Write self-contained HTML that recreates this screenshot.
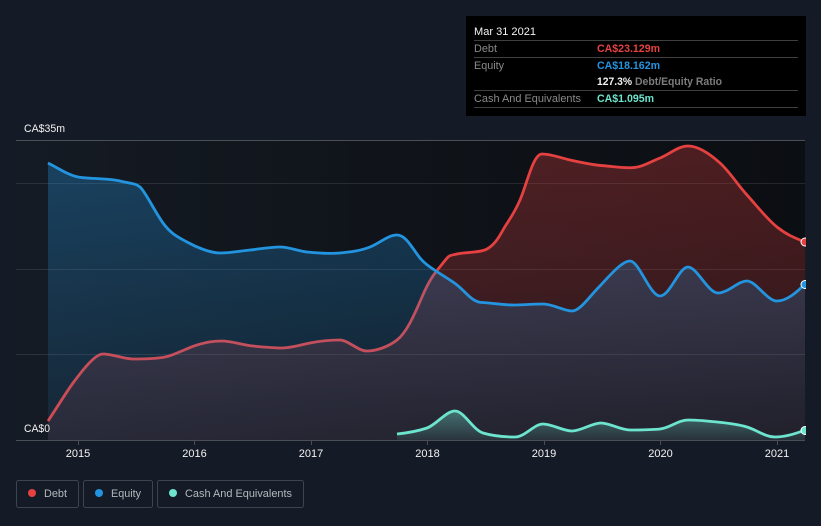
<!DOCTYPE html>
<html><head><meta charset="utf-8"><style>
html,body{margin:0;padding:0;background:#151b26;width:821px;height:526px;overflow:hidden}
svg{position:absolute;left:0;top:0}
text{font-family:"Liberation Sans",sans-serif;font-size:11px}
.tb{font-size:10.6px}
.b{font-weight:bold}
</style></head><body>
<svg width="821" height="526" viewBox="0 0 821 526" xmlns="http://www.w3.org/2000/svg">
<defs>
<linearGradient id="bgp" x1="0" x2="1" y1="0" y2="0"><stop offset="0" stop-color="#151b24"/><stop offset=".45" stop-color="#10141a"/><stop offset="1" stop-color="#0b0e12"/></linearGradient>
<linearGradient id="fd" gradientUnits="userSpaceOnUse" x1="0" x2="0" y1="140" y2="440"><stop offset="0" stop-color="#e64141" stop-opacity=".3"/><stop offset=".5" stop-color="#e64141" stop-opacity=".22"/><stop offset=".87" stop-color="#e64141" stop-opacity=".12"/><stop offset="1" stop-color="#e64141" stop-opacity=".1"/></linearGradient>
<linearGradient id="fe" gradientUnits="userSpaceOnUse" x1="0" x2="0" y1="140" y2="440"><stop offset="0" stop-color="#2394df" stop-opacity=".34"/><stop offset="1" stop-color="#2394df" stop-opacity=".1"/></linearGradient>
<linearGradient id="fc" gradientUnits="userSpaceOnUse" x1="0" x2="0" y1="410" y2="440"><stop offset="0" stop-color="#6ce4ce" stop-opacity=".4"/><stop offset="1" stop-color="#6ce4ce" stop-opacity=".08"/></linearGradient>
<clipPath id="cp"><rect x="16" y="130" width="790" height="320"/></clipPath>
</defs>
<rect x="0" y="0" width="821" height="526" fill="#151b26"/>
<rect x="16" y="140" width="789" height="300" fill="url(#bgp)"/>
<g stroke="#fff" stroke-opacity=".1" stroke-width="1">
<path d="M16 183.500H805M16 269.500H805M16 354.500H805"/>
</g>
<path d="M16 140.500H805M16 440.500H805" stroke="#4b4e55" stroke-width="1"/>
<path d="M78.500 441V445M194.500 441V445M311.500 441V445M427.500 441V445M544.500 441V445M660.500 441V445M777.500 441V445" stroke="#4b4e55"/>

<path fill="url(#fd)" d="M48,421C56,409 67,391 73,383S94,354 103,354S125,359 133,359S155,359 165,357S187,348 197,345S213,341 222,341S243,345 253,346S273,348 282,348S300,345 310,343S332,340 340,340S358,351 367,351S388,347 397,340S413,318 422,297S436,272 443,263S449,256 457,254S480,253 487,249S498,239 503,230S513,216 520,200S533,154 542,154S561,158 570,160S593,165 603,165.700S622,168 632,167.700S650,162 660,158S678,146 688,146S710,154 720,163S737,184 747,195S767,219 777,227S795,238 805,242L805,440L48,440Z"/>
<path fill="none" stroke="#e64141" stroke-width="2.800" stroke-linejoin="round" d="M48,421C56,409 67,391 73,383S94,354 103,354S125,359 133,359S155,359 165,357S187,348 197,345S213,341 222,341S243,345 253,346S273,348 282,348S300,345 310,343S332,340 340,340S358,351 367,351S388,347 397,340S413,318 422,297S436,272 443,263S449,256 457,254S480,253 487,249S498,239 503,230S513,216 520,200S533,154 542,154S561,158 570,160S593,165 603,165.700S622,168 632,167.700S650,162 660,158S678,146 688,146S710,154 720,163S737,184 747,195S767,219 777,227S795,238 805,242"/>

<path fill="url(#fe)" d="M48,163C58,168 68,175 78,177S108,178 120,181S135,183 140,187S155,212 163,223S178,237 187,242S210,253 220,253S240,251 250,250S270,247 280,247S297,251 307,252S330,254 340,253S360,251 370,247S388,235 397,235S412,248 420,258S447,277 457,285S472,302 482,302.500S503,305 513,305S533,304 543,304S564,311 572,311S590,296 598,288S621,261 630,261S650,296 660,296S679,267 688,267S708,293 718,293S738,281 747,281S767,301 777,301S797,292 805,284L805,440L48,440Z"/>
<path fill="none" stroke="#2394df" stroke-width="2.800" stroke-linejoin="round" d="M48,163C58,168 68,175 78,177S108,178 120,181S135,183 140,187S155,212 163,223S178,237 187,242S210,253 220,253S240,251 250,250S270,247 280,247S297,251 307,252S330,254 340,253S360,251 370,247S388,235 397,235S412,248 420,258S447,277 457,285S472,302 482,302.500S503,305 513,305S533,304 543,304S564,311 572,311S590,296 598,288S621,261 630,261S650,296 660,296S679,267 688,267S708,293 718,293S738,281 747,281S767,301 777,301S797,292 805,284"/>

<path fill="url(#fc)" d="M397,434C407,433 418,431 427,428S446,411 455,411S473,430 483,433S505,437 515,437S534,424 543,424S563,431 572,431S592,423 601,423S620,430 630,430S650,430 660,429S678,420 688,420S707,421 717,422S737,424 747,427S765,437 775,437S795,434 805,430L805,440L397,440Z"/>
<path fill="none" stroke="#6ce4ce" stroke-width="2.800" stroke-linejoin="round" d="M397,434C407,433 418,431 427,428S446,411 455,411S473,430 483,433S505,437 515,437S534,424 543,424S563,431 572,431S592,423 601,423S620,430 630,430S650,430 660,429S678,420 688,420S707,421 717,422S737,424 747,427S765,437 775,437S795,434 805,430"/>

<g clip-path="url(#cp)" stroke="#fff" stroke-width="1">
<circle cx="805" cy="242" r="4" fill="#e64141"/>
<circle cx="805" cy="284.500" r="4" fill="#2394df"/>
<circle cx="805" cy="430.500" r="4" fill="#6ce4ce"/>
</g>

<text x="24" y="132" fill="#f2f2f2" textLength="41" lengthAdjust="spacingAndGlyphs">CA$35m</text>
<text x="24" y="432" fill="#f2f2f2" textLength="26" lengthAdjust="spacingAndGlyphs">CA$0</text>
<g fill="#f2f2f2" text-anchor="middle">
<text x="78" y="457">2015</text><text x="194.500" y="457">2016</text><text x="311" y="457">2017</text><text x="427.500" y="457">2018</text><text x="544" y="457">2019</text><text x="660.500" y="457">2020</text><text x="777" y="457">2021</text>
</g>

<rect x="466" y="16" width="340" height="100" fill="#000"/>
<path d="M474 40.500H798M474 57.500H798M474 90.500H798M474 107.500H798" stroke="#3f3f3f"/>
<text class="tb" x="474" y="35" fill="#f2f2f2" textLength="62" lengthAdjust="spacingAndGlyphs">Mar 31 2021</text>
<text class="tb" x="474" y="52" fill="#8a8a8a" textLength="23" lengthAdjust="spacingAndGlyphs">Debt</text>
<text class="tb b" x="597" y="52" fill="#e64141" textLength="63" lengthAdjust="spacingAndGlyphs">CA$23.129m</text>
<text class="tb" x="474" y="69" fill="#8a8a8a" textLength="30" lengthAdjust="spacingAndGlyphs">Equity</text>
<text class="tb b" x="597" y="69" fill="#2394df" textLength="63" lengthAdjust="spacingAndGlyphs">CA$18.162m</text>
<text class="tb b" x="597" y="85" fill="#f2f2f2" textLength="35" lengthAdjust="spacingAndGlyphs">127.3%</text>
<text class="tb b" x="635" y="85" fill="#7d7d7d" textLength="87" lengthAdjust="spacingAndGlyphs">Debt/Equity Ratio</text>
<text class="tb" x="474" y="102" fill="#8a8a8a" textLength="107" lengthAdjust="spacingAndGlyphs">Cash And Equivalents</text>
<text class="tb b" x="597" y="102" fill="#6ce4ce" textLength="57" lengthAdjust="spacingAndGlyphs">CA$1.095m</text>

<g fill="none" stroke="#3f434b">
<rect x="16.500" y="480.500" width="62" height="27" rx="2"/>
<rect x="83.500" y="480.500" width="69" height="27" rx="2"/>
<rect x="157.500" y="480.500" width="146" height="27" rx="2"/>
</g>
<circle cx="32" cy="493" r="4" fill="#e64141"/>
<circle cx="99" cy="493" r="4" fill="#2394df"/>
<circle cx="173" cy="493" r="4" fill="#6ce4ce"/>
<text x="44" y="497" fill="#b5b8bd" textLength="23" lengthAdjust="spacingAndGlyphs">Debt</text>
<text x="111" y="497" fill="#b5b8bd" textLength="30" lengthAdjust="spacingAndGlyphs">Equity</text>
<text x="185" y="497" fill="#b5b8bd" textLength="107" lengthAdjust="spacingAndGlyphs">Cash And Equivalents</text>
</svg>
</body></html>
